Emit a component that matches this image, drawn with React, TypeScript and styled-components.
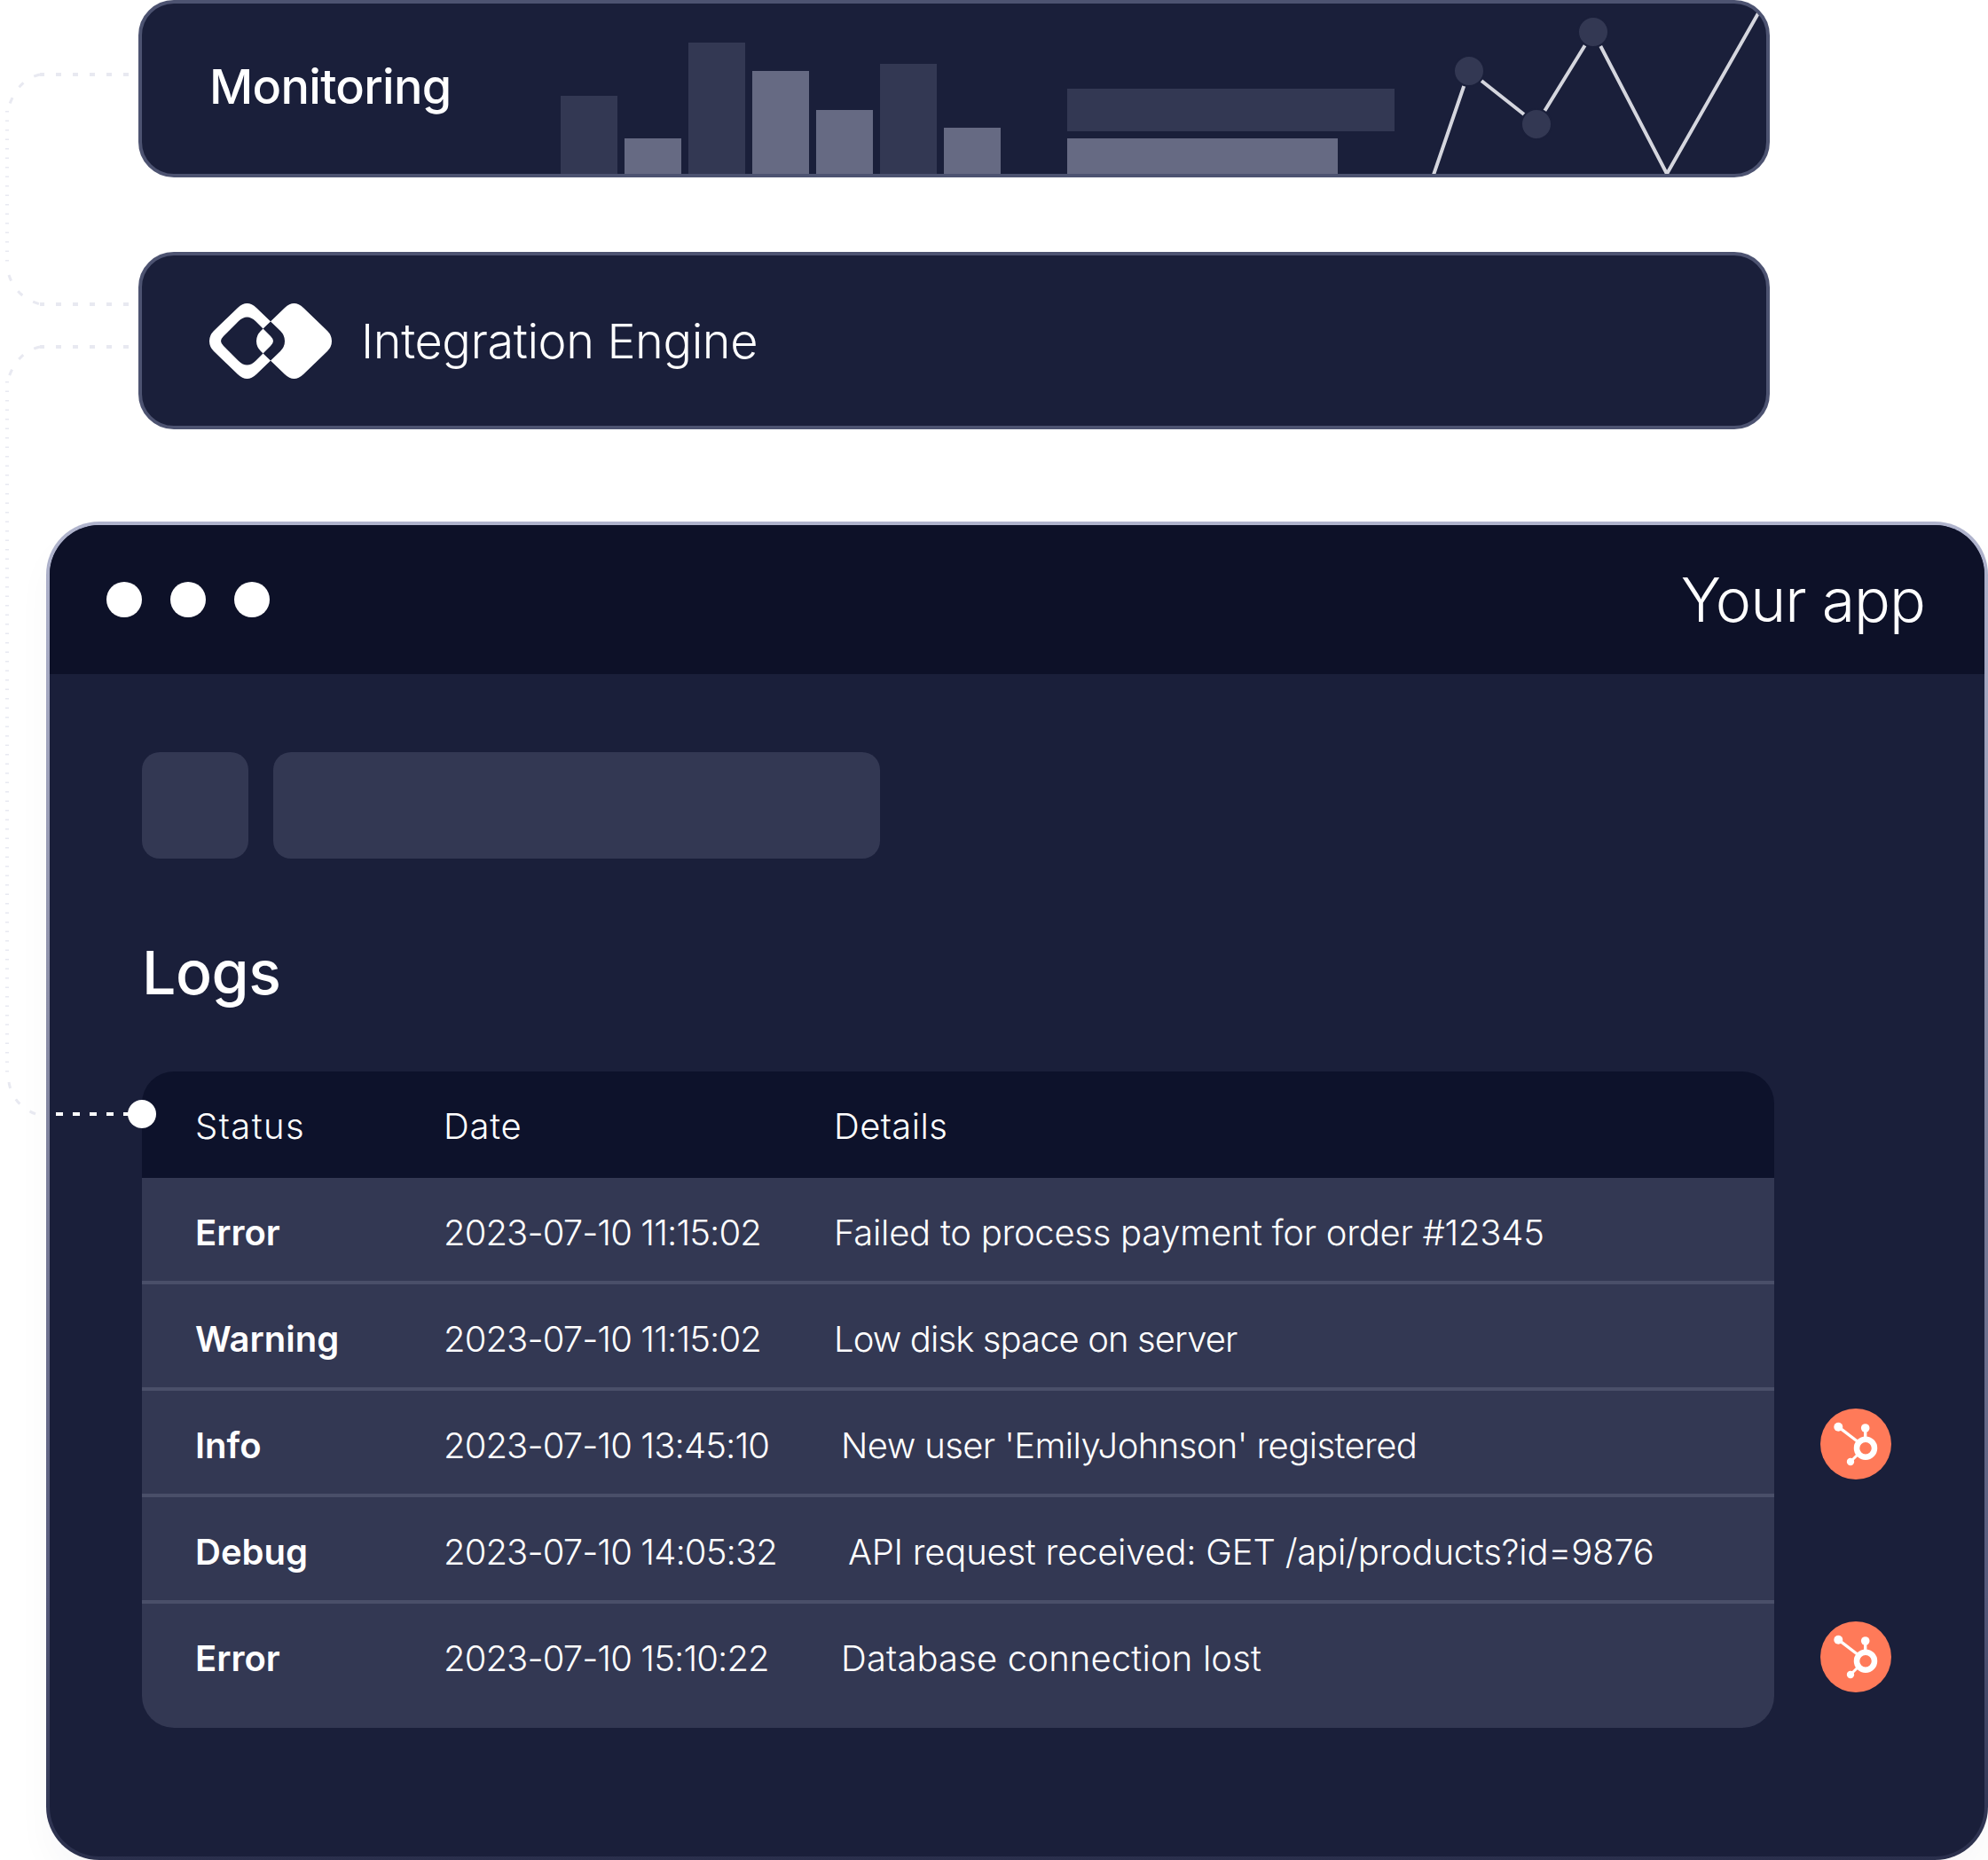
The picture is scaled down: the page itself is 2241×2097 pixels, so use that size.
import React from 'react'
import styled, { createGlobalStyle } from 'styled-components'

const GlobalStyle = createGlobalStyle`
  html,
  body {
    margin: 0;
    padding: 0;
    background: #fff;
  }

  body {
    font-family: Inter, 'Noto Sans', sans-serif;
    color: #fff;
  }
`

const Page = styled('div')`
  position: relative;
  width: 2241px;
  height: 2097px;
  overflow: hidden;
`

const Traces = styled('svg')`
  position: absolute;
  left: 0;
  top: 0;
  pointer-events: none;
`

const Card = styled('section')<{ $gap?: number }>`
  display: flex;
  align-items: center;
  box-sizing: border-box;
  width: 1839px;
  height: 200px;
  margin: 0 0 84px 156px;
  padding-left: 76px;
  gap: ${({ $gap }) => $gap ?? 0}px;
  background: #1a1f3a;
  border: 4px solid #4d5371;
  border-radius: 40px;
  overflow: hidden;
`

const CardTitle = styled('h2')`
  flex: 0 0 396px;
  margin: 0 0 4px;
  font-size: 54px;
  font-weight: 500;
  letter-spacing: -0.7px;
  line-height: 64px;
`

const EngineTitle = styled('span')`
  margin-top: 2px;
  font-size: 54px;
  font-weight: 300;
  letter-spacing: -0.4px;
  line-height: 64px;
`

const BarChart = styled('div')`
  display: flex;
  align-items: flex-end;
  gap: 8px;
  align-self: stretch;
`

const Bar = styled('div')<{ $height: number; $light?: boolean }>`
  width: 64px;
  height: ${({ $height }) => $height}px;
  background: ${({ $light }) => ($light ? '#666a83' : '#333853')};
`

const HBars = styled('div')`
  display: flex;
  flex-direction: column;
  justify-content: flex-end;
  gap: 8px;
  align-self: stretch;
  margin-left: 75px;
`

const HBar = styled('div')<{ $width: number; $height: number; $light?: boolean }>`
  width: ${({ $width }) => $width}px;
  height: ${({ $height }) => $height}px;
  background: ${({ $light }) => ($light ? '#666a83' : '#333853')};
`

const LineChart = styled('svg')`
  flex: none;
  margin-left: 38px;
  align-self: stretch;
`

const Window = styled('section')`
  box-sizing: border-box;
  width: 2189px;
  height: 1509px;
  margin: 104px 0 0 52px;
  border: 4px solid transparent;
  border-radius: 60px;
  background:
    linear-gradient(#1a1f3a, #1a1f3a) padding-box,
    linear-gradient(180deg, #b0b4cd 0%, #8c8fa8 35%, #55597a 80%, #2a2f4c 100%) border-box;
  box-shadow: 0 24px 40px rgba(26, 31, 58, 0.03);
  overflow: hidden;
`

const TitleBar = styled('header')`
  display: flex;
  align-items: center;
  justify-content: space-between;
  height: 168px;
  padding: 0 67px 0 64px;
  background: #0d1128;
`

const Dots = styled('div')`
  display: flex;
  gap: 32px;
`

const Dot = styled('span')`
  width: 40px;
  height: 40px;
  border-radius: 50%;
  background: #fff;
`

const AppName = styled('span')`
  font-size: 68px;
  font-weight: 300;
  letter-spacing: -1px;
  line-height: 80px;
`

const Body = styled('div')`
  padding: 88px 0 0 104px;
`

const Skeletons = styled('div')`
  display: flex;
  gap: 28px;
`

const Skeleton = styled('div')<{ $width: number }>`
  width: ${({ $width }) => $width}px;
  height: 120px;
  background: #333853;
  border-radius: 20px;
`

const Heading = styled('h1')`
  margin: 88px 0 0;
  font-size: 68px;
  font-weight: 500;
  letter-spacing: -0.5px;
  line-height: 80px;
`

const Table = styled('div')`
  position: relative;
  width: 1840px;
  margin-top: 72px;
`

const Connector = styled('span')`
  position: absolute;
  left: -97px;
  top: 46px;
  width: 84px;
  height: 4px;
  background: repeating-linear-gradient(90deg, #fff 0 8px, transparent 8px 19px);
`

const Node = styled('span')`
  position: absolute;
  left: -16px;
  top: 32px;
  width: 32px;
  height: 32px;
  border-radius: 50%;
  background: #fff;
`

const Row = styled('div')<{ $head?: boolean; $last?: boolean }>`
  position: relative;
  box-sizing: border-box;
  display: grid;
  grid-template-columns: 280px 440px 1fr;
  align-items: start;
  height: ${({ $head, $last }) => ($head ? 120 : $last ? 140 : 120)}px;
  padding: 34px 0 0 60px;
  font-size: 40px;
  line-height: 56px;
  background: ${({ $head }) => ($head ? '#0d122b' : '#333853')};
  border-bottom: ${({ $head, $last }) => ($head || $last ? 'none' : '4px solid #4a4f69')};
  border-radius: ${({ $head, $last }) =>
    $head ? '36px 36px 0 0' : $last ? '0 0 36px 36px' : '0'};
`

const StatusCell = styled('span')<{ $head?: boolean; $track?: number }>`
  font-weight: ${({ $head }) => ($head ? 300 : 600)};
  letter-spacing: ${({ $track }) => $track ?? 0}px;
`

const Cell = styled('span')<{ $indent?: number; $track?: number }>`
  font-weight: 300;
  margin-left: ${({ $indent }) => $indent ?? 0}px;
  letter-spacing: ${({ $track }) => $track ?? 0}px;
  white-space: nowrap;
`

const Badge = styled('svg')<{ $top: number }>`
  position: absolute;
  right: -132px;
  top: ${({ $top }) => $top}px;
`

function EngineLogo() {
  return (
    <svg width="138" height="87" viewBox="0 0 138 87" aria-hidden="true">
      <path
        fill="#fff"
        fillRule="evenodd"
        d="M0 43.5Q0 37 5 32L32 6Q42.5 -4 53 6L80 32Q85 37 85 43.5Q85 50 80 55L53 81Q42.5 91 32 81L5 55Q0 50 0 43.5Z
           M13 43.5Q13 46 16 49L33 66Q42.5 75 52 66L69 49Q72 46 72 43.5Q72 41 69 38L52 21Q42.5 12 33 21L16 38Q13 41 13 43.5Z
           M53 43.5Q53 37 58 32L85 6Q95.5 -4 106 6L133 32Q138 37 138 43.5Q138 50 133 55L106 81Q95.5 91 85 81L58 55Q53 50 53 43.5Z"
      />
    </svg>
  )
}

function HubspotBadge({ top }: { top: number }) {
  return (
    <Badge $top={top} width="80" height="80" viewBox="0 0 80 80" aria-hidden="true">
      <circle cx="40" cy="40" r="40" fill="#ff7a59" />
      <g stroke="#fff" fill="none">
        <circle cx="51" cy="44.7" r="10" strokeWidth="6.5" />
        <path d="M20.3 20.7L43 38" strokeWidth="3.4" />
        <path d="M50.7 22V35" strokeWidth="3.4" />
        <path d="M34 60L43 51" strokeWidth="3" />
      </g>
      <circle cx="20.3" cy="20.7" r="5" fill="#fff" />
      <circle cx="50.7" cy="22" r="4.8" fill="#fff" />
      <circle cx="34" cy="60" r="4.2" fill="#fff" />
    </Badge>
  )
}

const bars = [
  { height: 88 },
  { height: 40, light: true },
  { height: 148 },
  { height: 116, light: true },
  { height: 72, light: true },
  { height: 124 },
  { height: 52, light: true },
]

const rows = [
  { status: 'Error', date: '2023-07-10 11:15:02', details: 'Failed to process payment for order #12345', track: -0.27 },
  { status: 'Warning', date: '2023-07-10 11:15:02', details: 'Low disk space on server', track: -0.9 },
  { status: 'Info', date: '2023-07-10 13:45:10', details: "New user 'EmilyJohnson' registered", track: -0.6, indent: 8, badge: 20 },
  { status: 'Debug', date: '2023-07-10 14:05:32', details: 'API request received: GET /api/products?id=9876', track: -0.23, indent: 16 },
  { status: 'Error', date: '2023-07-10 15:10:22', details: 'Database connection lost', track: 0.15, indent: 8, badge: 20 },
]

export default function App() {
  return (
    <Page>
      <GlobalStyle />
      <Traces width="156" height="1300" viewBox="0 0 156 1300" aria-hidden="true">
        <g fill="none" stroke="#e8e9f1">
          <path d="M145 84H45" strokeWidth="4" strokeDasharray="6 13" />
          <path d="M45 84Q20 90 10 120" strokeWidth="3" strokeDasharray="7 14" />
          <path d="M8 125V300" strokeWidth="4" strokeDasharray="1.5 9" />
          <path d="M10 310Q18 335 45 343" strokeWidth="3" strokeDasharray="7 14" />
          <path d="M145 343H45" strokeWidth="4" strokeDasharray="6 13" />
          <path d="M145 391H45" strokeWidth="4" strokeDasharray="6 13" />
          <path d="M45 391Q20 397 10 425" strokeWidth="3" strokeDasharray="7 14" />
          <path d="M8 430V1215" strokeWidth="4" strokeDasharray="1.5 9" />
          <path d="M10 1220Q14 1245 40 1256" strokeWidth="3" strokeDasharray="7 14" />
        </g>
      </Traces>

      <Card>
        <CardTitle>Monitoring</CardTitle>
        <BarChart>
          {bars.map((bar, i) => (
            <Bar key={i} $height={bar.height} $light={bar.light} />
          ))}
        </BarChart>
        <HBars>
          <HBar $width={369} $height={48} />
          <HBar $width={305} $height={40} $light />
        </HBars>
        <LineChart width="376" height="192" viewBox="1610 4 376 192" aria-hidden="true">
          <path
            d="M1615 200L1656 80L1732 140L1796 36L1879 196L1986 8"
            fill="none"
            stroke="#d5d6de"
            strokeWidth="4"
          />
          <g fill="#333853" stroke="#1a1f3a" strokeWidth="2">
            <circle cx="1656" cy="80" r="17" />
            <circle cx="1732" cy="140" r="17" />
            <circle cx="1796" cy="36" r="17" />
          </g>
        </LineChart>
      </Card>

      <Card $gap={33}>
        <EngineLogo />
        <EngineTitle>Integration Engine</EngineTitle>
      </Card>

      <Window>
        <TitleBar>
          <Dots>
            <Dot />
            <Dot />
            <Dot />
          </Dots>
          <AppName>Your app</AppName>
        </TitleBar>
        <Body>
          <Skeletons>
            <Skeleton $width={120} />
            <Skeleton $width={684} />
          </Skeletons>
          <Heading>Logs</Heading>
          <Table>
            <Connector />
            <Row $head>
              <StatusCell $head $track={1.4}>Status</StatusCell>
              <Cell $track={0.7}>Date</Cell>
              <Cell $track={0.4}>Details</Cell>
            </Row>
            {rows.map((row, i) => (
              <Row key={i} $last={i === rows.length - 1}>
                <StatusCell>{row.status}</StatusCell>
                <Cell $track={-0.9}>{row.date}</Cell>
                <Cell $indent={row.indent} $track={row.track}>{row.details}</Cell>
                {row.badge && <HubspotBadge top={row.badge} />}
              </Row>
            ))}
            <Node />
          </Table>
        </Body>
      </Window>
    </Page>
  )
}
